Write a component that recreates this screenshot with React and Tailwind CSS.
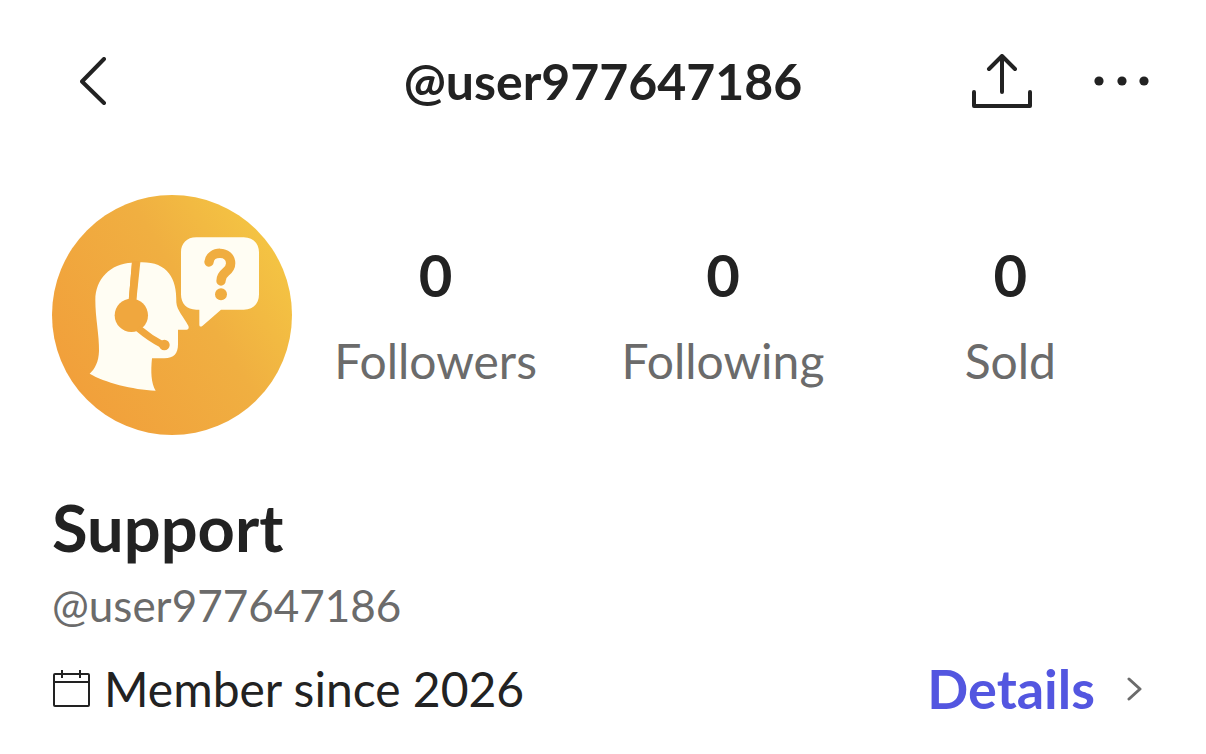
import React from "react";

const user = {
    name: "Support",
    handle: "@user977647186",
    memberSince: 2026,
};

const stats = [
    { label: "Followers", value: 0 },
    { label: "Following", value: 0 },
    { label: "Sold", value: 0 },
];

function Avatar() {
    return (
        <svg viewBox="33 30 720 720" className="size-[240px] shrink-0" role="img" aria-label="Support avatar">
            <defs>
                <linearGradient id="avatarBg" x1="0.1" y1="0.8" x2="0.95" y2="0.25">
                    <stop offset="0" stopColor="#f1a03b" />
                    <stop offset="0.6" stopColor="#f0af41" />
                    <stop offset="1" stopColor="#f4c443" />
                </linearGradient>
            </defs>
            <circle cx="393" cy="390" r="360" fill="url(#avatarBg)" />

            {/* Head */}
            <path
                d="M273 233C208 236 163 282 163 345C163 400 175 450 174 498C173 530 162 552 146 566C190 592 275 614 344 617C330 596 329 558 333 520H370C399 520 411 505 411 478V434H437C443 434 445 427 441 421C430 399 407 376 406 352C408 278 378 230 298 232L286 346H263Z"
                fill="#fffdf3"
            />

            {/* Headset */}
            <path d="M284 228L274 350" fill="none" stroke="#f0a73e" strokeWidth="22" />
            <circle cx="271" cy="391" r="50" fill="#f0a73e" />
            <path d="M292 430Q326 459 366 480" fill="none" stroke="#f0a73e" strokeWidth="21" />
            <circle cx="370" cy="480" r="16" fill="#f0a73e" />

            {/* Speech bubble */}
            <path
                d="M466 157H608C637 157 654 176 654 202V328C654 356 637 374 608 374H540L484 423C479 427 475 424 475 419V374H466C437 374 420 356 420 328V202C420 176 437 157 466 157Z"
                fill="#fffdf3"
            />
            <path
                d="M504 231C507 197 568 194 569 235C569 264 540 258 540 288"
                fill="none"
                stroke="#f0ad40"
                strokeWidth="28"
                strokeLinecap="round"
            />
            <circle cx="540" cy="328" r="18" fill="#f0ad40" />
        </svg>
    );
}

export default function App() {
    return (
        <div className="bg-white font-['Lato',sans-serif] text-[#222222] px-[52px]">
            {/* Top bar */}
            <header className="grid grid-cols-[1fr_auto_1fr] items-center h-[162px]">
                <button type="button" aria-label="Back" className="justify-self-start pl-7">
                    <svg width="27" height="48" viewBox="0 0 27 48" fill="none" stroke="currentColor" strokeWidth="4" strokeLinecap="round" strokeLinejoin="round">
                        <path d="M24 2L2 24.500L24 46" />
                    </svg>
                </button>
                <h1 className="text-[50px] leading-[60px] font-bold">{user.handle}</h1>
                <div className="flex items-center justify-self-end gap-[62px]">
                    <button type="button" aria-label="Share">
                        <svg width="60" height="54" viewBox="0 0 60 54" fill="none" stroke="currentColor" strokeWidth="4" strokeLinecap="round" strokeLinejoin="round">
                            <path d="M30 38V3M17 15L30 2L43 15M2 38V52H58V38" />
                        </svg>
                    </button>
                    <button type="button" aria-label="More options" className="pr-1">
                        <svg width="56" height="10" viewBox="0 0 56 10" fill="currentColor">
                            <circle cx="5" cy="5" r="4.600" />
                            <circle cx="28" cy="5" r="4.600" />
                            <circle cx="50" cy="5" r="4.600" />
                        </svg>
                    </button>
                </div>
            </header>

            {/* Avatar and stats */}
            <section className="flex items-center pt-[33px]">
                <Avatar />
                <dl className="grid grid-cols-3 flex-1 text-center">
                    {stats.map((stat) => (
                        <div key={stat.label} className="flex flex-col-reverse gap-5">
                            <dt className="text-[48px] leading-[60px] text-[#6b6b6b]">{stat.label}</dt>
                            <dd className="text-[58px] leading-[72px] font-bold">{stat.value}</dd>
                        </div>
                    ))}
                </dl>
            </section>

            {/* Profile info */}
            <section className="pt-[52px] pb-6">
                <h2 className="text-[65px] leading-[80px] font-bold">{user.name}</h2>
                <p className="text-[44px] leading-[60px] pt-2 text-[#6b6b6b]">{user.handle}</p>
                <div className="flex items-center justify-between pt-6">
                    <p className="flex items-center gap-3 text-[48px] leading-[60px]">
                        <svg width="40" height="38" viewBox="0 0 40 38" fill="none" stroke="currentColor" strokeWidth="2">
                            <rect x="2" y="4" width="35" height="32" rx="1" />
                            <path d="M2 12H37M10 0V8M28 0V8" />
                        </svg>
                        Member since {user.memberSince}
                    </p>
                    <a href="#details" className="flex items-center gap-8 pr-3 text-[54px] leading-[60px] font-bold text-[#5356e0]">
                        Details
                        <svg width="15" height="24" viewBox="0 0 15 24" fill="none" stroke="#6b6b6b" strokeWidth="3" strokeLinecap="round" strokeLinejoin="round">
                            <path d="M2 2L13 12L2 22" />
                        </svg>
                    </a>
                </div>
            </section>
        </div>
    );
}
